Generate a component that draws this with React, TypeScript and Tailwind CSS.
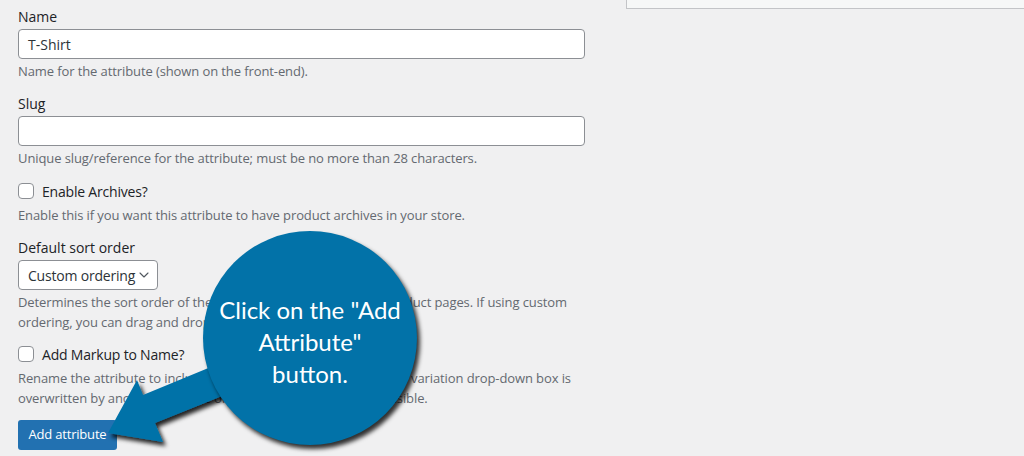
import { ChevronDown } from 'lucide-react';

const ui = "font-['Segoe_UI','Open_Sans','Noto_Sans',sans-serif]";

function Label({ children, className = '' }: { children: React.ReactNode; className?: string }) {
  return <div className={`text-[14px] leading-[20px] text-[#1d2327] ${className}`}>{children}</div>;
}

function Desc({ children, className = '' }: { children: React.ReactNode; className?: string }) {
  return <p className={`text-[13px] leading-[20px] text-[#646970] tracking-[-0.1px] ${className}`}>{children}</p>;
}

function Checkbox({ label, className = '' }: { label: string; className?: string }) {
  return (
    <label className={`flex items-center h-[20px] ${className}`}>
      <span className="w-4 h-4 bg-white border border-[#8c8f94] rounded-[4px]" />
      <span className="ml-2 text-[14px] text-[#1d2327] tracking-[-0.2px]">{label}</span>
    </label>
  );
}

export default function App() {
  return (
    <div className={`relative w-[1024px] h-[456px] overflow-hidden bg-[#f0f0f1] ${ui}`}>
      <div className="flex">
        <div className="w-[626px] pl-[18px] pt-[7px]">
          <Label>Name</Label>
          <div className="mt-[2px] w-[567px] h-[30px] bg-white border border-[#8c8f94] rounded-[4px] px-[9px] flex items-center text-[14px] text-[#2c3338]">
            T-Shirt
          </div>
          <Desc className="mt-[2px]">Name for the attribute (shown on the front-end).</Desc>

          <Label className="mt-[13px]">Slug</Label>
          <div className="mt-[2px] w-[567px] h-[30px] bg-white border border-[#8c8f94] rounded-[4px]" />
          <Desc className="mt-[2px]">Unique slug/reference for the attribute; must be no more than 28 characters.</Desc>

          <Checkbox label="Enable Archives?" className="mt-[13px]" />
          <Desc className="mt-[4px]">Enable this if you want this attribute to have product archives in your store.</Desc>

          <Label className="mt-[13px]">Default sort order</Label>
          <div className="mt-[2px] w-[140px] h-[30px] bg-white border border-[#8c8f94] rounded-[4px] pl-[9px] pr-[5px] flex items-center justify-between text-[14px] text-[#2c3338]">
            <span className="tracking-[-0.2px]">Custom ordering</span>
            <ChevronDown size={16} strokeWidth={1.6} className="text-[#50575e]" />
          </div>
          <Desc className="mt-[2px] w-[567px]">
            Determines the sort order of the terms on the frontend shop product pages. If using custom ordering, you can drag and drop the terms in this attribute.
          </Desc>

          <Checkbox label="Add Markup to Name?" className="mt-[12px]" />
          <Desc className="mt-[4px] w-[567px]">
            Rename the attribute to include a unique suffix so the label in the variation drop-down box is
            <br />
            overwritten by another attribute of the same name and is not visible.
          </Desc>

          <button className="mt-[12px] h-[30px] w-[99px] bg-[#2271b1] text-white text-[13px] rounded-[3px] tracking-[-0.2px]">
            Add attribute
          </button>
        </div>
        <div className="flex-1">
          <div className="h-[9px] bg-[#f6f7f7] border-l border-b border-[#c3c4c7]" />
        </div>
      </div>

      {/* callout arrow */}
      <svg className="absolute inset-0 pointer-events-none" width="1024" height="456" viewBox="0 0 1024 456">
        <defs>
          <filter id="shadow" x="-20%" y="-20%" width="140%" height="140%">
            <feDropShadow dx="3" dy="4" stdDeviation="2" floodColor="#000" floodOpacity="0.85" />
          </filter>
        </defs>
        <polygon
          points="108,433 137,380 143,395 252,350 262,380 155,423 163,442"
          fill="#0272a8"
          filter="url(#shadow)"
        />
      </svg>

      {/* callout bubble */}
      <div className="absolute left-[203px] top-[231px] w-[214px] h-[214px] rounded-full bg-[#0272a8] shadow-[3px_4px_4px_rgba(0,0,0,0.8)] flex items-center justify-center pt-[8px]">
        <p className="text-white text-center text-[24px] leading-[32px] font-['Lato','Open_Sans',sans-serif]">
          Click on the "Add
          <br />
          Attribute"
          <br />
          button.
        </p>
      </div>
    </div>
  );
}
